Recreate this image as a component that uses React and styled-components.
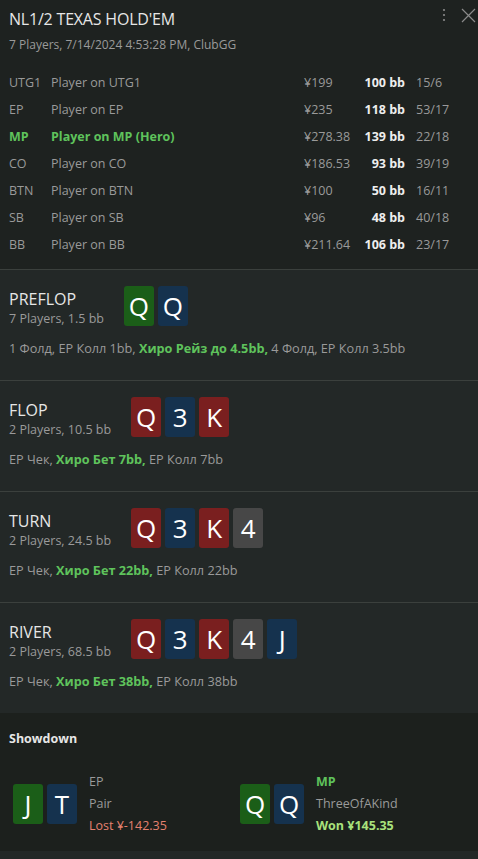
import React from "react";
import styled, { createGlobalStyle } from "styled-components";

const GlobalStyle = createGlobalStyle`
  html, body {
    margin: 0;
    padding: 0;
    background: #1e2220;
  }
  body {
    font-family: "Open Sans", "Noto Sans", sans-serif;
    color: #c8c8c8;
  }
`;

const CARD_COLORS = {
  h: "#7a1f1f",
  s: "#15324e",
  c: "#1b5e18",
  d: "#474747",
};

const Panel = styled.div`
  width: 478px;
  min-height: 859px;
  background: #1e2220;
  display: flex;
  flex-direction: column;
`;

const Header = styled.header`
  position: relative;
  padding: 8px 9px 11px;
`;

const Title = styled.h1`
  margin: 0;
  font-size: 16px;
  font-weight: 400;
  line-height: 22px;
  color: #e6e6e6;
  letter-spacing: -0.2px;
`;

const SubTitle = styled.div`
  font-size: 12px;
  line-height: 18px;
  color: #9a9a9a;
  margin-top: 6px;
`;

const Controls = styled.div`
  position: absolute;
  top: 7px;
  right: 2px;
  display: flex;
  align-items: center;
  gap: 14px;
`;

const PlayerGrid = styled.div`
  margin-top: 15px;
  display: grid;
  grid-template-columns: 42px 253px 55px 46px auto;
  grid-auto-rows: 27px;
  align-items: center;
  font-size: 12.5px;
`;

const Cell = styled.div`
  color: ${(p) => (p.$hero ? "#5fc35c" : p.$bright ? "#eeeeee" : "#9a9a9a")};
  font-weight: ${(p) => (p.$hero || p.$bright ? 700 : 400)};
  text-align: ${(p) => (p.$right ? "right" : "left")};
  padding-left: ${(p) => (p.$pad ? "11px" : "0")};
  white-space: nowrap;
`;

const Street = styled.section`
  background: #232827;
  border-top: 1px solid #3b403d;
  padding: 16px 9px 23px;
`;

const StreetHead = styled.div`
  display: flex;
  align-items: flex-start;
`;

const StreetInfo = styled.div`
  padding-top: 2px;
  margin-right: 20px;
`;

const StreetName = styled.div`
  font-size: 16px;
  line-height: 22px;
  color: #e6e6e6;
`;

const StreetMeta = styled.div`
  font-size: 12.5px;
  line-height: 18px;
  color: #9a9a9a;
`;

const Cards = styled.div`
  display: flex;
  gap: 4px;
`;

const Card = styled.div`
  width: 30px;
  height: 40px;
  border-radius: 3px;
  background: ${(p) => CARD_COLORS[p.$suit]};
  color: #ffffff;
  font-size: 26px;
  line-height: 40px;
  text-align: center;
  font-family: "Open Sans", sans-serif;
`;

const Actions = styled.div`
  margin-top: 11px;
  font-size: 12.7px;
  line-height: 18px;
  color: #9a9a9a;
`;

const Hero = styled.span`
  color: #5fc35c;
  font-weight: 700;
`;

const Showdown = styled.section`
  background: #1c201d;
  padding: 17px 9px 14px;
  flex: 1;
`;

const ShowTitle = styled.div`
  font-size: 12.5px;
  font-weight: 700;
  color: #e6e6e6;
  line-height: 18px;
`;

const ShowRow = styled.div`
  margin-top: 23px;
  display: grid;
  grid-template-columns: 227px 1fr;
  padding-left: 4px;
`;

const ShowHand = styled.div`
  display: flex;
  align-items: center;
  gap: 12px;
`;

const ShowText = styled.div`
  font-size: 12.5px;
  line-height: 22px;
  color: #9a9a9a;
`;

const ShowPos = styled.div`
  color: ${(p) => (p.$hero ? "#5fc35c" : "#9a9a9a")};
  font-weight: ${(p) => (p.$hero ? 700 : 400)};
`;

const Result = styled.div`
  color: ${(p) => (p.$won ? "#a9e27c" : "#e5806f")};
  font-weight: ${(p) => (p.$won ? 700 : 400)};
`;

const Footer = styled.div`
  height: 9px;
  background: #232827;
`;

const players = [
  ["UTG1", "Player on UTG1", "¥199", "100 bb", "15/6"],
  ["EP", "Player on EP", "¥235", "118 bb", "53/17"],
  ["MP", "Player on MP (Hero)", "¥278.38", "139 bb", "22/18", true],
  ["CO", "Player on CO", "¥186.53", "93 bb", "39/19"],
  ["BTN", "Player on BTN", "¥100", "50 bb", "16/11"],
  ["SB", "Player on SB", "¥96", "48 bb", "40/18"],
  ["BB", "Player on BB", "¥211.64", "106 bb", "23/17"],
];

const streets = [
  {
    name: "PREFLOP",
    meta: "7 Players, 1.5 bb",
    cards: [["Q", "c"], ["Q", "s"]],
    before: "1 Фолд, EP Колл 1bb, ",
    hero: "Хиро Рейз до 4.5bb,",
    after: " 4 Фолд, EP Колл 3.5bb",
  },
  {
    name: "FLOP",
    meta: "2 Players, 10.5 bb",
    cards: [["Q", "h"], ["3", "s"], ["K", "h"]],
    before: "EP Чек, ",
    hero: "Хиро Бет 7bb,",
    after: " EP Колл 7bb",
  },
  {
    name: "TURN",
    meta: "2 Players, 24.5 bb",
    cards: [["Q", "h"], ["3", "s"], ["K", "h"], ["4", "d"]],
    before: "EP Чек, ",
    hero: "Хиро Бет 22bb,",
    after: " EP Колл 22bb",
  },
  {
    name: "RIVER",
    meta: "2 Players, 68.5 bb",
    cards: [["Q", "h"], ["3", "s"], ["K", "h"], ["4", "d"], ["J", "s"]],
    before: "EP Чек, ",
    hero: "Хиро Бет 38bb,",
    after: " EP Колл 38bb",
  },
];

function CardList({ cards }) {
  return (
    <Cards>
      {cards.map(([rank, suit], i) => (
        <Card key={i} $suit={suit}>
          {rank}
        </Card>
      ))}
    </Cards>
  );
}

export default function App() {
  return (
    <Panel>
      <GlobalStyle />
      <Header>
        <Title>NL1/2 TEXAS HOLD'EM</Title>
        <SubTitle>7 Players, 7/14/2024 4:53:28 PM, ClubGG</SubTitle>
        <Controls>
          <svg width="6" height="16" viewBox="0 0 6 16">
            <circle cx="3" cy="3" r="1.1" fill="#8a8a8a" />
            <circle cx="3" cy="8" r="1.1" fill="#8a8a8a" />
            <circle cx="3" cy="13" r="1.1" fill="#8a8a8a" />
          </svg>
          <svg width="15" height="15" viewBox="0 0 15 15">
            <path d="M1 1L14 14M14 1L1 14" stroke="#8a8a8a" strokeWidth="1.2" />
          </svg>
        </Controls>
        <PlayerGrid>
          {players.map(([pos, name, stack, bb, ratio, hero]) => (
            <React.Fragment key={pos}>
              <Cell $hero={hero}>{pos}</Cell>
              <Cell $hero={hero}>{name}</Cell>
              <Cell>{stack}</Cell>
              <Cell $bright $right>
                {bb}
              </Cell>
              <Cell $pad>{ratio}</Cell>
            </React.Fragment>
          ))}
        </PlayerGrid>
      </Header>

      {streets.map((s) => (
        <Street key={s.name}>
          <StreetHead>
            <StreetInfo>
              <StreetName>{s.name}</StreetName>
              <StreetMeta>{s.meta}</StreetMeta>
            </StreetInfo>
            <CardList cards={s.cards} />
          </StreetHead>
          <Actions>
            {s.before}
            <Hero>{s.hero}</Hero>
            {s.after}
          </Actions>
        </Street>
      ))}

      <Showdown>
        <ShowTitle>Showdown</ShowTitle>
        <ShowRow>
          <ShowHand>
            <CardList cards={[["J", "c"], ["T", "s"]]} />
            <ShowText>
              <ShowPos>EP</ShowPos>
              <div>Pair</div>
              <Result>Lost ¥-142.35</Result>
            </ShowText>
          </ShowHand>
          <ShowHand>
            <CardList cards={[["Q", "c"], ["Q", "s"]]} />
            <ShowText>
              <ShowPos $hero>MP</ShowPos>
              <div>ThreeOfAKind</div>
              <Result $won>Won ¥145.35</Result>
            </ShowText>
          </ShowHand>
        </ShowRow>
      </Showdown>
      <Footer />
    </Panel>
  );
}
